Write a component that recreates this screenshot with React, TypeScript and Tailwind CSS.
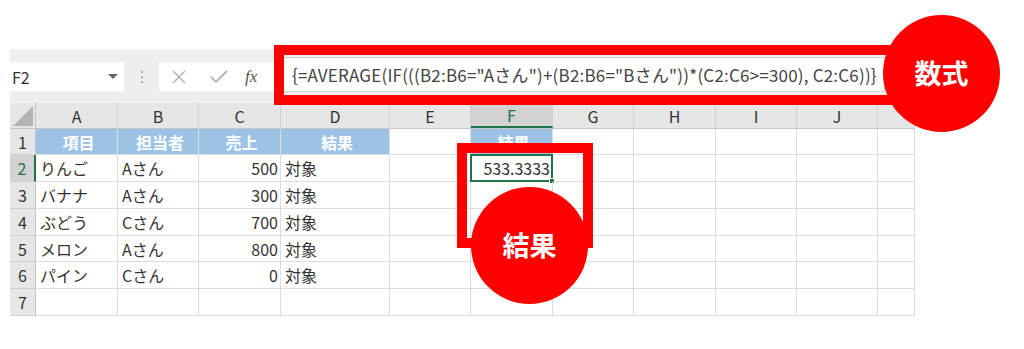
import React from "react";

const FONT = { fontFamily: '"Noto Sans CJK JP", "Noto Sans", sans-serif' };

const cols = ["A", "B", "C", "D", "E", "F", "G", "H", "I", "J", ""];
const widths = ["w-[82px]", "w-[81px]", "w-[82px]", "w-[109px]", "w-[81px]", "w-[82px]", "w-[81px]", "w-[82px]", "w-[81px]", "w-[81px]", "w-[37px]"];
const heights = ["h-[26px]", "h-[27px]", "h-[27px]", "h-[27px]", "h-[26px]", "h-[27px]", "h-[27px]"];

type Cell = { text?: string; align?: "left" | "right" | "center"; head?: boolean };

const data: Cell[][] = [
  [{ text: "項目", head: true }, { text: "担当者", head: true }, { text: "売上", head: true }, { text: "結果", head: true }, {}, { text: "結果", head: true }],
  [{ text: "りんご" }, { text: "Aさん" }, { text: "500", align: "right" }, { text: "対象" }, {}, { text: "533.3333", align: "right" }],
  [{ text: "バナナ" }, { text: "Aさん" }, { text: "300", align: "right" }, { text: "対象" }],
  [{ text: "ぶどう" }, { text: "Cさん" }, { text: "700", align: "right" }, { text: "対象" }],
  [{ text: "メロン" }, { text: "Aさん" }, { text: "800", align: "right" }, { text: "対象" }],
  [{ text: "パイン" }, { text: "Cさん" }, { text: "0", align: "right" }, { text: "対象" }],
  [],
];

export default function App() {
  return (
    <div className="relative w-[1024px] h-[349px] bg-white overflow-hidden" style={FONT}>
      <div className="ml-[10px] mt-[49px] w-[905px]">
        {/* toolbar */}
        <div className="h-[54px] bg-[#eeeeee] flex items-start">
          <div className="mt-[13px] w-[114px] h-[29px] bg-white flex items-center justify-between pl-[2px] pr-[6px]">
            <span className="text-[16px] text-[#333]">F2</span>
            <span className="w-0 h-0 border-l-[5px] border-r-[5px] border-t-[5px] border-l-transparent border-r-transparent border-t-[#666]" />
          </div>
          <div className="w-[35px] h-[54px] flex flex-col items-center justify-center gap-[3px] pt-[1px]">
            <span className="w-[2px] h-[2px] bg-[#aaa]" />
            <span className="w-[2px] h-[2px] bg-[#aaa]" />
            <span className="w-[2px] h-[2px] bg-[#aaa]" />
          </div>
          <div className="mt-[13px] w-[124px] h-[29px] bg-white flex items-center">
            <svg width="14" height="14" viewBox="0 0 14 14" className="ml-[13px]">
              <path d="M1 1 L13 13 M13 1 L1 13" stroke="#b5b5b5" strokeWidth="1.5" />
            </svg>
            <svg width="18" height="14" viewBox="0 0 18 14" className="ml-[24px]">
              <path d="M1 7 L6 12 L17 1" stroke="#b5b5b5" strokeWidth="1.8" fill="none" />
            </svg>
            <span className="ml-[17px] text-[17px] italic text-[#555]" style={{ fontFamily: '"Liberation Serif", serif' }}>
              fx
            </span>
          </div>
          <div className="mt-[8px] w-[602px] h-[35px] bg-white border border-[#d0d0d0] flex items-center pl-[8px]">
            <span className="text-[17px] text-[#444] whitespace-nowrap tracking-[0.2px]">
              {'{=AVERAGE(IF(((B2:B6="Aさん")+(B2:B6="Bさん"))*(C2:C6>=300), C2:C6))}'}
            </span>
          </div>
        </div>

        {/* column headers */}
        <div className="flex h-[26px] bg-[#e6e6e6] border-b border-[#c6c6c6]">
          <div className="w-[26px] h-full relative border-r border-[#c6c6c6]">
            <svg width="20" height="20" viewBox="0 0 20 20" className="absolute right-[2px] bottom-[2px]">
              <path d="M20 0 L20 20 L0 20 Z" fill="#b4b4b4" />
            </svg>
          </div>
          {cols.map((c, i) => (
            <div
              key={i}
              className={`${widths[i]} h-full flex items-center justify-center text-[16px] border-r border-[#d0d0d0] ${
                c === "F" ? "bg-[#d2d2d2] text-[#217346] border-b-2 border-b-[#217346]" : "text-[#333]"
              }`}
            >
              {c}
            </div>
          ))}
        </div>

        {/* rows */}
        {data.map((row, r) => (
          <div key={r} className={`flex ${heights[r]}`}>
            <div
              className={`w-[26px] h-full flex items-center justify-center text-[16px] border-b border-[#d0d0d0] ${
                r === 1 ? "bg-[#d2d2d2] text-[#217346] border-r-2 border-r-[#217346]" : "bg-[#e6e6e6] text-[#333] border-r border-r-[#c6c6c6]"
              }`}
            >
              {r + 1}
            </div>
            {cols.map((_, i) => {
              const cell = row[i] || {};
              const selected = r === 1 && i === 5;
              return (
                <div
                  key={i}
                  className={`${widths[i]} h-full relative flex items-center text-[16px] whitespace-nowrap border-b border-r border-[#dcdcdc] ${
                    cell.head ? "bg-[#9cc2e5] text-white font-bold justify-center" : "text-[#333]"
                  } ${cell.align === "right" ? "justify-end pr-[2px]" : "pl-[4px]"}`}
                >
                  {cell.text}
                  {selected && (
                    <div className="absolute -left-px -top-px -right-[1px] -bottom-[1px] border-2 border-[#217346]">
                      <span className="absolute -right-[4px] -bottom-[4px] w-[6px] h-[6px] bg-[#217346] border border-white" />
                    </div>
                  )}
                </div>
              );
            })}
          </div>
        ))}
      </div>

      {/* annotations */}
      <div className="absolute left-[274px] top-[45px] w-[630px] h-[60px] border-[10px] border-[#ff0000]" />
      <div className="absolute left-[883px] top-[15px] w-[117px] h-[117px] rounded-full bg-[#ff0000] flex items-center justify-center">
        <span className="text-white text-[27px] font-bold">数式</span>
      </div>
      <div className="absolute left-[457px] top-[143px] w-[136px] h-[105px] border-[10px] border-[#ff0000]" />
      <div className="absolute left-[471px] top-[187px] w-[117px] h-[117px] rounded-full bg-[#ff0000] flex items-center justify-center">
        <span className="text-white text-[27px] font-bold">結果</span>
      </div>
    </div>
  );
}
